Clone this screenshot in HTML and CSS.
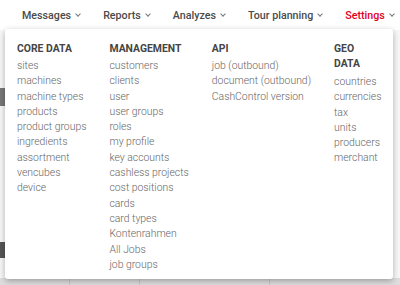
FILE: index.html
```html
<!DOCTYPE html>
<html lang="en">
<head>
    <meta charset="UTF-8">
    <meta name="viewport" content="width=device-width, initial-scale=1.0">
    <title>Settings</title>
    <link rel="stylesheet" href="styles.css">
</head>
<body>
    <nav class="topnav">
        <a class="nav-item">Messages <span class="chev"></span></a>
        <a class="nav-item">Reports <span class="chev"></span></a>
        <a class="nav-item">Analyzes <span class="chev"></span></a>
        <a class="nav-item">Tour planning <span class="chev"></span></a>
        <a class="nav-item active">Settings <span class="chev"></span></a>
    </nav>

    <div class="page">
        <div class="side-mark top"></div>
        <div class="side-mark bottom"></div>
        <div class="table-strip">
            <span class="cell"></span>
            <span class="cell"></span>
            <span class="cell wide"></span>
        </div>
    </div>

    <div class="dropdown">
        <div class="col">
            <h4>Core Data</h4>
            <a>sites</a>
            <a>machines</a>
            <a>machine types</a>
            <a>products</a>
            <a>product groups</a>
            <a>ingredients</a>
            <a>assortment</a>
            <a>vencubes</a>
            <a>device</a>
        </div>
        <div class="col">
            <h4>Management</h4>
            <a>customers</a>
            <a>clients</a>
            <a>user</a>
            <a>user groups</a>
            <a>roles</a>
            <a>my profile</a>
            <a>key accounts</a>
            <a>cashless projects</a>
            <a>cost positions</a>
            <a>cards</a>
            <a>card types</a>
            <a>Kontenrahmen</a>
            <a>All Jobs</a>
            <a>job groups</a>
        </div>
        <div class="col">
            <h4>API</h4>
            <a>job (outbound)</a>
            <a>document (outbound)</a>
            <a>CashControl version</a>
        </div>
        <div class="col last">
            <h4>Geo Data</h4>
            <a>countries</a>
            <a>currencies</a>
            <a>tax</a>
            <a>units</a>
            <a>producers</a>
            <a>merchant</a>
        </div>
    </div>
</body>
</html>
```

FILE: styles.css
```css
* {
    box-sizing: border-box;
}
body {
    margin: 0;
    font-family: Roboto, "Noto Sans", Arial, sans-serif;
    background-color: #fff;
    height: 285px;
    overflow: hidden;
    position: relative;
}
.topnav {
    display: flex;
    gap: 23px;
    height: 30px;
    align-items: center;
    padding-left: 22px;
    background: #fff;
}
.nav-item {
    font-size: 10.7px;
    font-weight: 500;
    color: #4a4a4a;
    display: flex;
    align-items: center;
    gap: 5px;
    white-space: nowrap;
}
.nav-item.active {
    color: #e3001b;
}
.chev {
    width: 4px;
    height: 4px;
    border-right: 1px solid #777;
    border-bottom: 1px solid #777;
    transform: rotate(45deg);
    margin-top: -2px;
}
.page {
    height: 255px;
    background: #f7f7f7;
    display: flex;
    flex-direction: column;
    justify-content: flex-end;
}
.side-mark {
    position: absolute;
    left: 0;
    width: 5px;
    background: #555;
}
.side-mark.top {
    top: 88px;
    height: 18px;
    background: #777;
}
.side-mark.bottom {
    top: 242px;
    height: 16px;
}
.table-strip {
    height: 7px;
    background: #dedede;
    display: flex;
}
.cell {
    width: 70px;
    border-right: 1px solid #c8c8c8;
}
.cell.wide {
    width: 130px;
}
.dropdown {
    position: absolute;
    top: 29px;
    left: 5px;
    width: 388px;
    height: 250px;
    background: #fff;
    border-radius: 3px;
    box-shadow: 0 2px 6px rgba(0, 0, 0, 0.3);
    padding: 12px 8px 12px 12px;
    display: flex;
    gap: 23px;
}
.col {
    display: flex;
    flex-direction: column;
    white-space: nowrap;
}
.col h4 {
    margin: 0 0 2px 0;
    font-size: 10.4px;
    line-height: 15px;
    font-weight: 700;
    text-transform: uppercase;
    color: #454545;
    white-space: normal;
}
.col.last h4 {
    max-width: 40px;
    margin-bottom: 3px;
}
.col a {
    font-size: 10.4px;
    line-height: 15.3px;
    font-weight: 300;
    color: #666;
}
```
